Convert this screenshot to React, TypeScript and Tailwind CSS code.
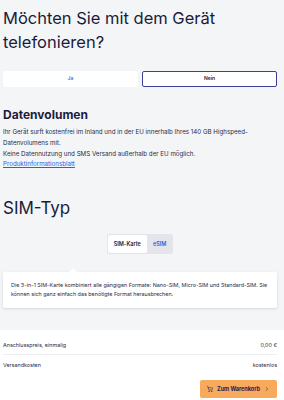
import { ShoppingCart, ChevronRight } from 'lucide-react';

export default function App() {
  return (
    <div className="w-[284px] min-h-[400px] bg-white font-['Inter',sans-serif] text-[#1b1c3a]">
      <div className="bg-[#f4f5f7] pl-[3px] pr-[7px] pt-[6px] pb-[22px]">
        <h1 className="text-[16.5px] leading-[24px] font-normal">
          Möchten Sie mit dem Gerät telefonieren?
        </h1>

        <div className="mt-[17px] grid grid-cols-2 gap-[4px]">
          <button className="h-[16px] rounded-[2px] bg-white text-[5px] font-semibold text-[#3b6fe0]">Ja</button>
          <button className="h-[16px] rounded-[2px] border border-[#3d3f95] bg-white text-[5px] font-semibold text-[#1b1c3a]">
            Nein
          </button>
        </div>

        <h2 className="mt-[20px] text-[12px] leading-[16px] font-bold">Datenvolumen</h2>
        <div className="mt-[4px] text-[6.2px] leading-[10.8px] text-[#2a2b45]">
          <p>Ihr Gerät surft kostenfrei im Inland und in der EU innerhalb Ihres 140 GB Highspeed-Datenvolumens mit.</p>
          <p>Keine Datennutzung und SMS Versand außerhalb der EU möglich.</p>
          <a className="text-[#2b5fe6] underline">Produktinformationsblatt</a>
        </div>

        <h2 className="mt-[26px] text-[17px] leading-[24px] font-normal">SIM-Typ</h2>

        <div className="mt-[14px] flex justify-center">
          <div className="flex rounded-[2px] bg-[#e3e5ea] p-[1px]">
            <div className="flex h-[18px] items-center rounded-[2px] bg-white px-[6px] text-[5.5px] font-semibold text-[#1b1c3a]">
              SIM-Karte
            </div>
            <div className="flex h-[18px] items-center px-[6px] text-[5.5px] font-semibold text-[#2b5fe6]">eSIM</div>
          </div>
        </div>

        <div className="relative mt-[18px] rounded-[2px] bg-white px-[8px] pt-[9px] pb-[9px] shadow-[0_1px_3px_rgba(0,0,0,0.12)]">
          <div className="absolute left-[66px] top-[-4px] h-0 w-0 border-x-[4px] border-b-[4px] border-x-transparent border-b-white" />
          <p className="text-[5.4px] leading-[9px] text-[#2a2b45]">
            Die 3-in-1 SIM-Karte kombiniert alle gängigen Formate: Nano-SIM, Micro-SIM und Standard-SIM. Sie können sich ganz einfach das benötigte Format herausbrechen.
          </p>
        </div>
      </div>

      <div className="bg-white pl-[3px] pr-[7px] pt-[5px] text-[5.4px] text-[#2a2b45]">
        <div className="flex h-[20px] items-center justify-between border-b border-[#eef0f3]">
          <span>Anschlusspreis, einmalig</span>
          <span>0,00 €</span>
        </div>
        <div className="flex h-[20px] items-center justify-between">
          <span>Versandkosten</span>
          <span>kostenlos</span>
        </div>
        <div className="mt-[5px] flex justify-end">
          <button className="flex h-[18px] w-[77px] items-center justify-center gap-[4px] rounded-[2px] bg-[#f7a95c] text-[5.5px] font-bold text-[#1b1c5a]">
            <ShoppingCart size={6} strokeWidth={2} />
            <span>Zum Warenkorb</span>
            <ChevronRight size={6} strokeWidth={2} />
          </button>
        </div>
      </div>
    </div>
  );
}
